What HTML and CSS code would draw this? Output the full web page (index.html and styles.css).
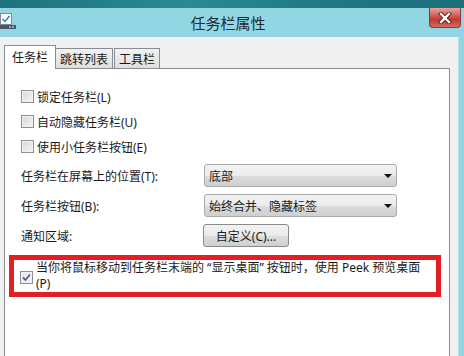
FILE: index.html
```html
<!DOCTYPE html>
<html lang="zh-CN">
<head>
  <meta charset="UTF-8" />
  <title>任务栏属性</title>
  <link rel="stylesheet" href="styles.css">
</head>
<body>
  <div class="window">
    <div class="frame-top"></div>

    <div class="titlebar">
      <svg class="app-icon" width="16" height="17" viewBox="0 0 16 17">
        <rect x="0.5" y="0.5" width="11" height="11" fill="#fdfdfd" stroke="#7b8a99"/>
        <path d="M2.5 6 L5 8.5 L9.5 3" fill="none" stroke="#2f7fc4" stroke-width="1.5"/>
        <rect x="0" y="12" width="16" height="4" fill="#4a5668"/>
        <rect x="9" y="13" width="2" height="2" fill="#9aa6b8"/>
        <rect x="12" y="13" width="2" height="2" fill="#9aa6b8"/>
      </svg>
      <div class="title">任务栏属性</div>
      <div class="close-btn">
        <svg width="14" height="12" viewBox="0 0 14 12">
          <path d="M3 2 L11 10 M11 2 L3 10" stroke="#5a1a16" stroke-width="4.2" stroke-linecap="square"/>
          <path d="M3 2 L11 10 M11 2 L3 10" stroke="#ffffff" stroke-width="2.4" stroke-linecap="square"/>
        </svg>
      </div>
    </div>

    <div class="frame-body">
      <div class="dialog">
        <div class="tabs">
          <div class="tab active">任务栏</div>
          <div class="tab">跳转列表</div>
          <div class="tab">工具栏</div>
        </div>

        <div class="panel">
          <div class="settings">
            <div class="check-row"><span class="checkbox"></span>锁定任务栏(L)</div>
            <div class="check-row"><span class="checkbox"></span>自动隐藏任务栏(U)</div>
            <div class="check-row"><span class="checkbox"></span>使用小任务栏按钮(E)</div>

            <div class="fields">
              <div class="field">
                <span class="field-label">任务栏在屏幕上的位置(T):</span>
                <div class="combo">底部<span class="arrow"></span></div>
              </div>
              <div class="field">
                <span class="field-label">任务栏按钮(B):</span>
                <div class="combo">始终合并、隐藏标签<span class="arrow"></span></div>
              </div>
              <div class="field">
                <span class="field-label">通知区域:</span>
                <div class="button">自定义(C)...</div>
              </div>
            </div>
          </div>

          <div class="highlight">
            <span class="checkbox checked">
              <svg width="11" height="11" viewBox="0 0 11 11">
                <path d="M2 5.5 L4.5 8 L9 2.5" fill="none" stroke="#4b5f8c" stroke-width="1.8"/>
              </svg>
            </span>
            <span class="peek-text">当你将鼠标移动到任务栏末端的 “显示桌面” 按钮时，使用 Peek 预览桌面<br>(P)</span>
          </div>
        </div>
      </div>
      <div class="frame-right"></div>
    </div>
  </div>
</body>
</html>
```

FILE: styles.css
```css
body {
  margin: 0;
  font-family: "Noto Sans", "Noto Sans CJK SC", sans-serif;
  font-size: 12px;
  color: #1a1a1a;
}

.window {
  width: 464px;
  height: 356px;
  overflow: hidden;
  display: flex;
  flex-direction: column;
}

.frame-top {
  height: 8px;
  flex-shrink: 0;
  background: linear-gradient(to right, #1d727d, #2a8a94 40%, #1f7883 70%, #1a6f7b);
}

.titlebar {
  height: 29px;
  flex-shrink: 0;
  display: flex;
  align-items: flex-start;
  background: #93d6e3;
}

.app-icon {
  margin-top: 5px;
  flex-shrink: 0;
}

.title {
  flex: 1;
  padding-left: 11px;
  text-align: center;
  font-family: "Noto Sans CJK SC", sans-serif;
  font-size: 15px;
  line-height: 29px;
  color: #1e2a2e;
}

.close-btn {
  width: 30px;
  height: 19px;
  margin-right: 3px;
  display: flex;
  align-items: center;
  justify-content: center;
  background: linear-gradient(to bottom, #e7a49e, #d0574e 45%, #c23a31 60%, #d26a5f);
  border: 1px solid #8c3a33;
  border-top: none;
  border-radius: 0 0 4px 4px;
}

.frame-body {
  flex: 1;
  display: flex;
  min-height: 0;
}

.dialog {
  flex: 1;
  display: flex;
  flex-direction: column;
  background: #f0f0f0;
  padding: 8px 8px 0 4px;
}

.frame-right {
  width: 5px;
  background: #93d6e3;
  border-left: 1px solid #b9dfe8;
}

.tabs {
  display: flex;
  align-items: flex-end;
  flex-shrink: 0;
}

.tab {
  height: 19px;
  padding: 0 4px;
  line-height: 19px;
  margin-right: 1px;
  border: 1px solid #898c95;
  border-bottom: none;
  background: linear-gradient(to bottom, #f2f2f2, #dedede);
  font-family: "Noto Sans CJK SC", sans-serif;
}

.tab.active {
  height: 23px;
  line-height: 22px;
  padding: 0 7px;
  margin-right: -1px;
  margin-bottom: -1px;
  background: #ffffff;
  position: relative;
  z-index: 1;
}

.panel {
  flex: 1;
  background: #ffffff;
  border: 1px solid #898c95;
  border-bottom: none;
  padding-top: 15px;
}

.settings {
  padding-left: 16px;
}

.check-row {
  height: 25px;
  display: flex;
  align-items: center;
  gap: 3px;
}

.checkbox {
  width: 11px;
  height: 11px;
  flex-shrink: 0;
  border: 1px solid #8e8f8f;
  background: linear-gradient(135deg, #d6d6d6, #f6f6f6);
  box-shadow: inset 0 0 0 1px #f2f2f2;
}

.checkbox.checked {
  display: flex;
  background: linear-gradient(135deg, #dfe3f1, #f7f8fc);
}

.fields {
  display: flex;
  flex-direction: column;
  gap: 7px;
  margin-top: 5px;
}

.field {
  height: 23px;
  display: flex;
  align-items: center;
}

.field-label {
  width: 183px;
  flex-shrink: 0;
}

.combo {
  width: 187px;
  height: 21px;
  padding-left: 4px;
  display: flex;
  align-items: center;
  border: 1px solid #a9a9a9;
  border-radius: 3px;
  background: linear-gradient(to bottom, #f2f2f2, #ebebeb 50%, #dcdcdc 51%, #cfcfcf);
}

.arrow {
  margin-left: auto;
  margin-right: 4px;
  border-left: 4px solid transparent;
  border-right: 4px solid transparent;
  border-top: 4px solid #111;
}

.button {
  width: 84px;
  height: 21px;
  margin-left: -1px;
  display: flex;
  align-items: center;
  justify-content: center;
  border: 1px solid #8a8a8a;
  border-radius: 3px;
  background: linear-gradient(to bottom, #f2f2f2, #ebebeb 50%, #dddddd 51%, #cfcfcf);
}

.highlight {
  width: 416px;
  margin: 8px 0 0 4px;
  padding: 0 0 0 6px;
  border: 5px solid #e31f26;
  display: flex;
  align-items: flex-start;
  gap: 3px;
}

.highlight .checkbox {
  margin-top: 11px;
}

.peek-text {
  line-height: 16px;
}
```
